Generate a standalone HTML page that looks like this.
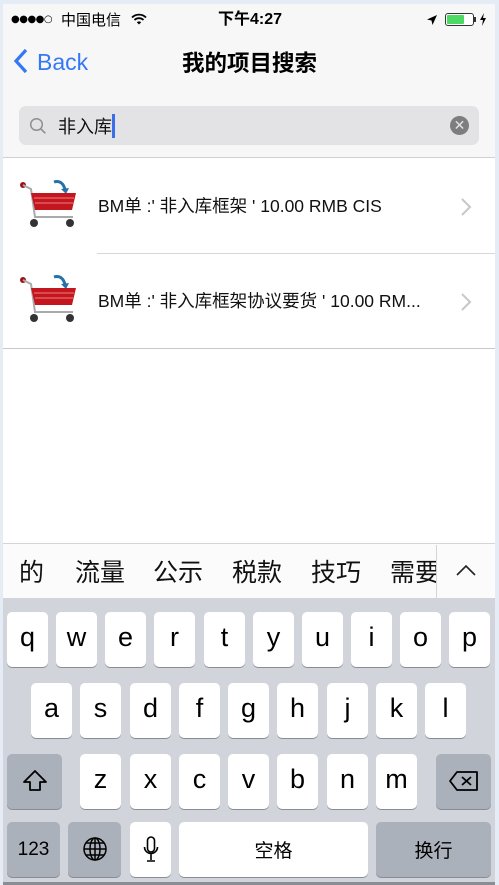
<!DOCTYPE html>
<html><head><meta charset="utf-8"><style>
*{margin:0;padding:0;box-sizing:border-box}
body{width:499px;height:885px;background:#e6ecf6;position:relative;overflow:hidden;font-family:"Liberation Sans","Noto Sans CJK SC",sans-serif}
.a{position:absolute}
.k{position:absolute;width:41px;height:55px;background:#fff;border-radius:5px;box-shadow:0 1px 0 #888d95;text-align:center;font-size:27px;line-height:50px;color:#000}
.g{background:#abb1ba}
.s{position:absolute;top:551px;font-size:25px;color:#111;font-family:"Noto Sans CJK SC",sans-serif;line-height:40px}
.r{position:absolute;left:98px;font-size:17.5px;line-height:22px;color:#111;font-family:'Liberation Sans','Noto Sans CJK SC',sans-serif;white-space:nowrap}
</style></head><body>
<div class="a" style="left:3px;top:4px;width:492px;height:153px;background:#f7f7f7"></div>
<div class="a" style="left:3px;top:157px;width:492px;height:1px;background:#d0d0d3"></div>
<div class="a" style="left:3px;top:158px;width:492px;height:385px;background:#fff"></div>
<!-- status -->
<div class="a" style="left:11px;top:12px;font-size:10px;letter-spacing:-0.5px;color:#000;font-family:'DejaVu Sans',sans-serif;line-height:16px">●●●●○</div>
<div class="a" style="left:61px;top:10px;font-size:15px;color:#000;font-family:'Noto Sans CJK SC',sans-serif;line-height:20px">中国电信</div>
<svg class="a" style="left:131px;top:13px" width="16" height="12" viewBox="0 0 16 12"><path d="M1 4.5a10 10 0 0 1 14 0M3.5 7a6.5 6.5 0 0 1 9 0" stroke="#000" stroke-width="1.8" fill="none"/><path d="M5.8 9.2a3.2 3.2 0 0 1 4.4 0L8 11.5z" fill="#000"/></svg>
<div class="a" style="left:218px;top:9px;font-size:16px;font-weight:bold;font-family:'Liberation Sans','Noto Sans CJK SC',sans-serif;line-height:22px">下午4:27</div>
<svg class="a" style="left:426px;top:14px" width="12" height="12"><path d="M11 1L1 5.5l4.5 1L6.5 11z" fill="#000"/></svg>
<div class="a" style="left:445px;top:13px;width:29px;height:13px;border:1px solid #333;border-radius:3px;background:#fff"></div>
<div class="a" style="left:447px;top:15px;width:17px;height:9px;background:#4cd964;border-radius:1px"></div>
<div class="a" style="left:474px;top:17px;width:2px;height:5px;background:#333"></div>
<svg class="a" style="left:479px;top:13px" width="8" height="13"><path d="M5 0L1 7h3l-1 6 4-8H4z" fill="#000"/></svg>
<!-- nav -->
<svg class="a" style="left:13px;top:48px" width="16" height="26"><path d="M13 2L3 13l10 11" stroke="#3478f6" stroke-width="3.2" fill="none"/></svg>
<div class="a" style="left:37px;top:47px;font-size:23px;color:#3478f6;line-height:30px">Back</div>
<div class="a" style="left:0;width:499px;top:46px;text-align:center;font-size:22.5px;font-weight:bold;font-family:'Noto Sans CJK SC',sans-serif;line-height:32px">我的项目搜索</div>
<!-- search -->
<div class="a" style="left:19px;top:106px;width:460px;height:39px;background:#e3e3e5;border-radius:7px"></div>
<svg class="a" style="left:29px;top:117px" width="18" height="18"><circle cx="7.5" cy="7.5" r="5.8" stroke="#8e8e93" stroke-width="1.5" fill="none"/><path d="M11.8 11.8l4.5 4.5" stroke="#8e8e93" stroke-width="1.6"/></svg>
<div class="a" style="left:58px;top:113px;font-size:18px;font-family:'Noto Sans CJK SC',sans-serif;line-height:26px;color:#111">非入库</div>
<div class="a" style="left:112px;top:114px;width:3px;height:24px;background:#3b6ee8"></div>
<div class="a" style="left:450px;top:116px;width:19px;height:19px;border-radius:50%;background:#7d7d80;color:#e3e3e5;font-size:14px;text-align:center;line-height:19px">✕</div>
<!-- rows -->
<svg class="a" style="left:18px;top:178px" width="60" height="55" viewBox="0 0 60 55"><path d="M36 4c6-2 10 2 11 8" stroke="#2870a8" stroke-width="3" fill="none"/><path d="M43 11l5 5 3-6z" fill="#2870a8"/><circle cx="5" cy="7" r="3" fill="#a0101a"/><path d="M5 7l8 4 4 28h38" stroke="#aaa" stroke-width="2" fill="none"/><path d="M13 15h45l-4 17H17z" fill="#c4161f"/><path d="M16 20h40M17 25h38" stroke="#f08080" stroke-width="1"/><circle cx="16" cy="45" r="4" fill="#333"/><circle cx="52" cy="45" r="4" fill="#333"/></svg>
<div class="r" style="top:195px">BM单 :' 非入库框架 ' 10.00 RMB CIS</div>
<svg class="a" style="left:460px;top:197px" width="12" height="20"><path d="M2 2l8 8-8 8" stroke="#c7c7cc" stroke-width="2" fill="none"/></svg>
<div class="a" style="left:97px;top:253px;width:398px;height:1px;background:#d8d8da"></div>
<svg class="a" style="left:18px;top:273px" width="60" height="55" viewBox="0 0 60 55"><path d="M36 4c6-2 10 2 11 8" stroke="#2870a8" stroke-width="3" fill="none"/><path d="M43 11l5 5 3-6z" fill="#2870a8"/><circle cx="5" cy="7" r="3" fill="#a0101a"/><path d="M5 7l8 4 4 28h38" stroke="#aaa" stroke-width="2" fill="none"/><path d="M13 15h45l-4 17H17z" fill="#c4161f"/><path d="M16 20h40M17 25h38" stroke="#f08080" stroke-width="1"/><circle cx="16" cy="45" r="4" fill="#333"/><circle cx="52" cy="45" r="4" fill="#333"/></svg>
<div class="r" style="top:290px">BM单 :' 非入库框架协议要货 ' 10.00 RM...</div>
<svg class="a" style="left:460px;top:292px" width="12" height="20"><path d="M2 2l8 8-8 8" stroke="#c7c7cc" stroke-width="2" fill="none"/></svg>
<div class="a" style="left:3px;top:348px;width:492px;height:1px;background:#c8c8cc"></div>
<!-- suggestions -->
<div class="a" style="left:3px;top:543px;width:492px;height:55px;background:#fbfbfb;border-top:1px solid #d5d5d8"></div>
<div class="s" style="left:19px">的</div><div class="s" style="left:75px">流量</div><div class="s" style="left:153px">公示</div><div class="s" style="left:232px">税款</div><div class="s" style="left:311px">技巧</div><div class="s" style="left:390px;width:46px;overflow:hidden;white-space:nowrap">需要</div>
<div class="a" style="left:436px;top:545px;width:1px;height:53px;background:#d5d5d8"></div>
<svg class="a" style="left:455px;top:564px" width="22" height="13"><path d="M2 11l9-9 9 9" stroke="#222" stroke-width="1.6" fill="none"/></svg>
<!-- keyboard -->
<div class="a" style="left:3px;top:598px;width:492px;height:287px;background:#d1d5db"></div>
<div class="k" style="left:7px;top:612px">q</div><div class="k" style="left:56px;top:612px">w</div><div class="k" style="left:105px;top:612px">e</div><div class="k" style="left:154px;top:612px">r</div><div class="k" style="left:204px;top:612px">t</div><div class="k" style="left:253px;top:612px">y</div><div class="k" style="left:302px;top:612px">u</div><div class="k" style="left:351px;top:612px">i</div><div class="k" style="left:400px;top:612px">o</div><div class="k" style="left:449px;top:612px">p</div>
<div class="k" style="left:31px;top:683px">a</div><div class="k" style="left:80px;top:683px">s</div><div class="k" style="left:130px;top:683px">d</div><div class="k" style="left:179px;top:683px">f</div><div class="k" style="left:228px;top:683px">g</div><div class="k" style="left:277px;top:683px">h</div><div class="k" style="left:327px;top:683px">j</div><div class="k" style="left:376px;top:683px">k</div><div class="k" style="left:425px;top:683px">l</div>
<div class="k g" style="left:7px;top:754px;width:55px"><svg width="28" height="26" style="margin-top:14px"><path d="M14 3L3 14h6v8h10v-8h6z" stroke="#000" stroke-width="1.8" fill="none" stroke-linejoin="round"/></svg></div>
<div class="k" style="left:80px;top:754px">z</div><div class="k" style="left:130px;top:754px">x</div><div class="k" style="left:179px;top:754px">c</div><div class="k" style="left:228px;top:754px">v</div><div class="k" style="left:277px;top:754px">b</div><div class="k" style="left:327px;top:754px">n</div><div class="k" style="left:376px;top:754px">m</div>
<div class="k g" style="left:436px;top:754px;width:55px"><svg width="32" height="22" style="margin-top:16px"><path d="M9 2h20v18H9L2 11z" stroke="#000" stroke-width="1.8" fill="none" stroke-linejoin="round"/><path d="M14 7l9 8M23 7l-9 8" stroke="#000" stroke-width="1.8"/></svg></div>
<div class="k g" style="left:7px;top:822px;width:53px;font-size:19px;line-height:56px">123</div>
<div class="k g" style="left:68px;top:822px;width:53px"><svg width="26" height="26" style="margin-top:14px" viewBox="0 0 26 26" fill="none" stroke="#000" stroke-width="1.5"><circle cx="13" cy="13" r="11"/><ellipse cx="13" cy="13" rx="5" ry="11"/><path d="M13 2v22M2 13h22M4 7h18M4 19h18"/></svg></div>
<div class="k" style="left:130px;top:822px"><svg width="16" height="28" style="margin-top:14px" fill="none" stroke="#000" stroke-width="1.6"><rect x="4.5" y="1" width="7" height="15" rx="3.5"/><path d="M1.5 11a6.5 6.5 0 0 0 13 0M8 18v6M4 25h8"/></svg></div>
<div class="k" style="left:179px;top:822px;width:189px;font-size:19px;line-height:56px;font-family:'Noto Sans CJK SC',sans-serif">空格</div>
<div class="k g" style="left:376px;top:822px;width:115px;font-size:19px;line-height:56px;font-family:'Noto Sans CJK SC',sans-serif">换行</div>
<div class="a" style="left:3px;top:882px;width:492px;height:3px;background:#8a8e94"></div>
</body></html>
